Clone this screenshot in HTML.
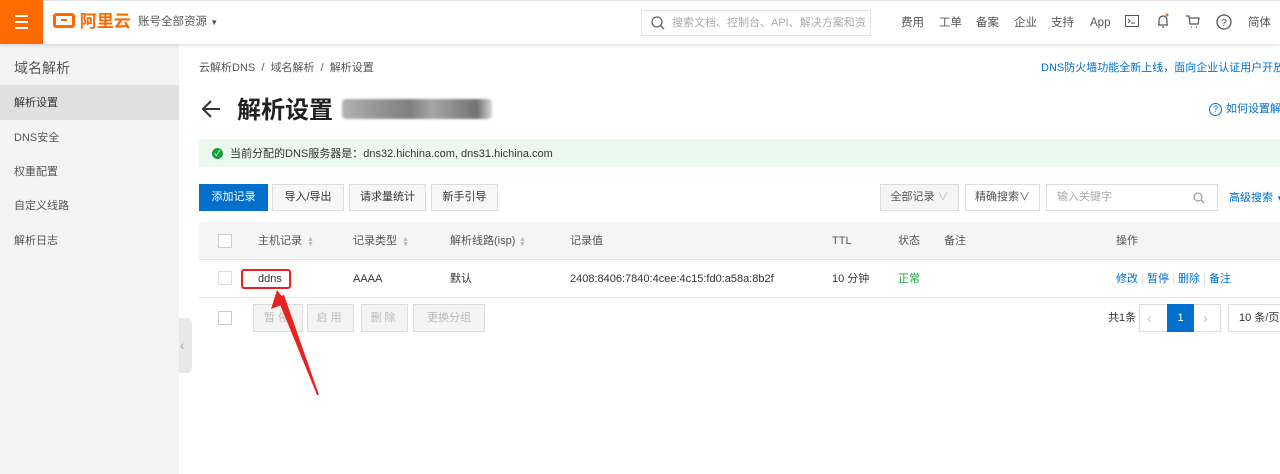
<!DOCTYPE html>
<html><head><meta charset="utf-8"><style>
*{box-sizing:border-box;margin:0;padding:0}
body{width:1280px;height:474px;overflow:hidden;background:#fff;font-family:"Liberation Sans","Noto Sans CJK SC",sans-serif;font-size:11px;color:#333;position:relative}
.a{position:absolute;white-space:nowrap;line-height:16px}
.btn{position:absolute;height:27px;border:1px solid #ddd;background:#f7f7f7;color:#333;text-align:center;line-height:25px;font-size:11px}
.dis{position:absolute;height:28px;border:1px solid #ddd;background:#f4f4f4;color:#bbb;text-align:center;line-height:26px;letter-spacing:3px}
.cb{position:absolute;width:14px;height:14px;border:1px solid #ccc;background:#fff}
.sort{position:absolute;color:#bbb;font-size:7px;line-height:5px!important;top:3px}
.nav{position:absolute;top:15px;color:#555;z-index:3;font-size:11.5px;line-height:16px}
</style></head><body>
<!-- top bar -->
<div class="a" style="left:0;top:0;width:1280px;height:44px;background:#fff;box-shadow:0 1px 4px rgba(0,0,0,.15);border-top:1px solid #e4e4e8;z-index:2"></div>
<div class="a" style="left:0;top:0;width:43px;height:44px;background:#ff6a00;z-index:3">
 <div class="a" style="left:15px;top:15px;width:13px;height:2px;background:#fff"></div>
 <div class="a" style="left:15px;top:21px;width:13px;height:2px;background:#fff"></div>
 <div class="a" style="left:15px;top:27px;width:13px;height:2px;background:#fff"></div>
</div>
<div class="a" style="left:53px;top:12px;z-index:3;color:#ff6a00;font-weight:bold;font-size:17px;line-height:20px">
 <span style="display:inline-block;width:22px;height:15px;border:3px solid #ff6a00;border-radius:3px;vertical-align:-1px;position:relative"><span style="position:absolute;left:5px;top:3px;width:6px;height:2px;background:#ff6a00"></span></span> 阿里云</div>
<div class="a" style="left:138px;top:14px;z-index:3;color:#555;font-size:11.5px">账号全部资源 <span style="font-size:8px">▼</span></div>
<div class="a" style="left:641px;top:10px;width:230px;height:26px;border:1px solid #e6e6e6;z-index:3;color:#aaa;font-size:11px;line-height:24px;padding-left:30px;overflow:hidden">搜索文档、控制台、API、解决方案和资
 <svg style="position:absolute;left:9px;top:5px" width="14" height="14" viewBox="0 0 14 14"><circle cx="6" cy="6" r="5" fill="none" stroke="#666" stroke-width="1.3"/><path d="M9.5 9.5L13 13" stroke="#666" stroke-width="1.3"/></svg></div>
<div class="nav" style="left:901px">费用</div>
<div class="nav" style="left:939px">工单</div>
<div class="nav" style="left:976px">备案</div>
<div class="nav" style="left:1014px">企业</div>
<div class="nav" style="left:1051px">支持</div>
<div class="nav" style="left:1090px">App</div>
<svg class="a" style="left:1125px;top:15px;z-index:3" width="14" height="12"><rect x=".5" y=".5" width="13" height="11" fill="none" stroke="#555"/><path d="M3 4l2 2-2 2M6 8h4" stroke="#555" fill="none"/></svg>
<svg class="a" style="left:1156px;top:13px;z-index:3" width="14" height="16"><path d="M3 12V7a4 4 0 018 0v5zM2 12h10M6 14h2" stroke="#555" fill="none" stroke-width="1.2"/><circle cx="11" cy="2" r="1.5" fill="#ff6a00"/></svg>
<svg class="a" style="left:1186px;top:15px;z-index:3" width="14" height="13"><path d="M0 1h3l1 8h8l1-6H4M5 12h1M10 12h1" stroke="#555" fill="none" stroke-width="1.2"/></svg>
<svg class="a" style="left:1216px;top:14px;z-index:3" width="16" height="16"><circle cx="8" cy="8" r="7" stroke="#555" fill="none" stroke-width="1.3"/><text x="8" y="12" font-size="10" text-anchor="middle" fill="#555" font-family="Liberation Sans">?</text></svg>
<div class="nav" style="left:1248px">简体</div>

<!-- sidebar -->
<div class="a" style="left:0;top:44px;width:179px;height:430px;background:#f4f4f4"></div>
<div class="a" style="left:14px;top:58px;font-size:14px;line-height:20px;color:#555">域名解析</div>
<div class="a" style="left:0;top:85px;width:179px;height:35px;background:#e0e0e0"></div>
<div class="a" style="left:14px;top:95px;color:#333">解析设置</div>
<div class="a" style="left:14px;top:130px;color:#555">DNS安全</div>
<div class="a" style="left:14px;top:164px;color:#555">权重配置</div>
<div class="a" style="left:14px;top:198px;color:#555">自定义线路</div>
<div class="a" style="left:14px;top:233px;color:#555">解析日志</div>
<div class="a" style="left:179px;top:318px;width:13px;height:55px;background:#e8e8e8;border-radius:0 6px 6px 0;color:#aaa;font-size:14px;line-height:55px;padding-left:1px">‹</div>

<!-- content -->
<div class="a" style="left:199px;top:60px;color:#555">云解析DNS &nbsp;/&nbsp; 域名解析 &nbsp;/&nbsp; 解析设置</div>
<div class="a" style="left:1041px;top:60px;color:#0070cc">DNS防火墙功能全新上线，面向企业认证用户开放公测</div>
<svg class="a" style="left:200px;top:98px" width="22" height="22"><path d="M20 11H3M11 3l-8 8 8 8" stroke="#333" stroke-width="2" fill="none"/></svg>
<div class="a" style="left:237px;top:94px;font-size:24px;line-height:34px;font-weight:bold;color:#222">解析设置</div>
<div class="a" style="left:342px;top:99px;width:150px;height:20px;background:linear-gradient(90deg,#999,#777 20%,#555 45%,#888 60%,#444 90%,#ccc);opacity:.75;filter:blur(1px);border-radius:4px"></div>
<div class="a" style="left:1209px;top:101px;color:#0070cc"><span style="display:inline-block;width:13px;height:13px;border:1px solid #0070cc;border-radius:50%;font-size:9px;text-align:center;line-height:11px;margin-right:4px">?</span>如何设置解析</div>

<div class="a" style="left:199px;top:139px;width:1081px;height:28px;background:#ebf8ee"></div>
<div class="a" style="left:212px;top:148px;width:11px;height:11px;border-radius:50%;background:#1e9e3a;color:#fff;font-size:8px;line-height:11px;text-align:center">✓</div>
<div class="a" style="left:230px;top:146px;color:#333">当前分配的DNS服务器是：dns32.hichina.com, dns31.hichina.com</div>

<div class="a" style="left:199px;top:184px;width:69px;height:27px;background:#0070cc;color:#fff;line-height:27px;text-align:center">添加记录</div>
<div class="btn" style="left:272px;top:184px;width:72px">导入/导出</div>
<div class="btn" style="left:349px;top:184px;width:77px">请求量统计</div>
<div class="btn" style="left:431px;top:184px;width:67px">新手引导</div>

<div class="btn" style="left:880px;top:184px;width:79px;background:#f5f5f5;color:#555">全部记录 <span style="color:#bbb">∨</span></div>
<div class="btn" style="left:965px;top:184px;width:75px;background:#fff;color:#555">精确搜索∨</div>
<div class="btn" style="left:1046px;top:184px;width:172px;background:#fff;color:#aaa;text-align:left;padding-left:10px">输入关键字
 <svg style="position:absolute;right:12px;top:7px" width="12" height="12"><circle cx="5" cy="5" r="4" stroke="#888" fill="none"/><path d="M8 8l3 3" stroke="#888"/></svg></div>
<div class="a" style="left:1229px;top:190px;color:#0070cc">高级搜索 <span style="font-size:8px">▼</span></div>

<!-- table -->
<div class="a" style="left:199px;top:222px;width:1081px;height:38px;background:#f5f5f5;border-bottom:1px solid #e5e5e5"></div>
<div class="cb" style="left:218px;top:234px"></div>
<div class="a" style="left:258px;top:233px;color:#555">主机记录</div><div class="sort a" style="left:307px;top:237px">▲<br>▼</div>
<div class="a" style="left:353px;top:233px;color:#555">记录类型</div><div class="sort a" style="left:402px;top:237px">▲<br>▼</div>
<div class="a" style="left:450px;top:233px;color:#555">解析线路(isp)</div><div class="sort a" style="left:519px;top:237px">▲<br>▼</div>
<div class="a" style="left:570px;top:233px;color:#555">记录值</div>
<div class="a" style="left:832px;top:233px;color:#555">TTL</div>
<div class="a" style="left:898px;top:233px;color:#555">状态</div>
<div class="a" style="left:944px;top:233px;color:#555">备注</div>
<div class="a" style="left:1116px;top:233px;color:#555">操作</div>

<div class="a" style="left:199px;top:297px;width:1081px;height:1px;background:#e5e5e5"></div>
<div class="cb" style="left:218px;top:271px;border-color:#ddd"></div>
<div class="a" style="left:241px;top:269px;width:50px;height:20px;border:2px solid #e8231f;border-radius:3px"></div>
<div class="a" style="left:258px;top:271px;color:#333">ddns</div>
<div class="a" style="left:353px;top:271px;color:#333">AAAA</div>
<div class="a" style="left:450px;top:271px;color:#333">默认</div>
<div class="a" style="left:570px;top:271px;color:#333">2408:8406:7840:4cee:4c15:fd0:a58a:8b2f</div>
<div class="a" style="left:832px;top:271px;color:#333">10 分钟</div>
<div class="a" style="left:898px;top:271px;color:#1e9e3a">正常</div>
<div class="a" style="left:1116px;top:271px;color:#0070cc">修改 <span style="color:#ddd">|</span> 暂停 <span style="color:#ddd">|</span> 删除 <span style="color:#ddd">|</span> 备注</div>

<div class="cb" style="left:218px;top:311px"></div>
<div class="dis" style="left:253px;top:304px;width:50px">暂停</div>
<div class="dis" style="left:307px;top:304px;width:47px">启用</div>
<div class="dis" style="left:361px;top:304px;width:47px">删除</div>
<div class="dis" style="left:413px;top:304px;width:72px;letter-spacing:0">更换分组</div>

<div class="a" style="left:1108px;top:310px;color:#333">共1条</div>
<div class="a" style="left:1139px;top:304px;width:82px;height:28px;border:1px solid #ddd"></div>
<div class="a" style="left:1147px;top:310px;color:#bbb;font-size:14px">‹</div>
<div class="a" style="left:1167px;top:304px;width:27px;height:28px;background:#0070cc;color:#fff;text-align:center;line-height:28px">1</div>
<div class="a" style="left:1203px;top:310px;color:#bbb;font-size:14px">›</div>
<div class="a" style="left:1228px;top:304px;width:60px;height:28px;border:1px solid #ddd;line-height:26px;padding-left:10px;color:#333">10 条/页</div>

<svg class="a" style="left:260px;top:285px" width="70" height="115"><path d="M17 12L57 110L59 110L24 10Z" fill="#e8231f"/><path d="M17 5L11 24L27 18Z" fill="#e8231f"/></svg>
</body></html>
